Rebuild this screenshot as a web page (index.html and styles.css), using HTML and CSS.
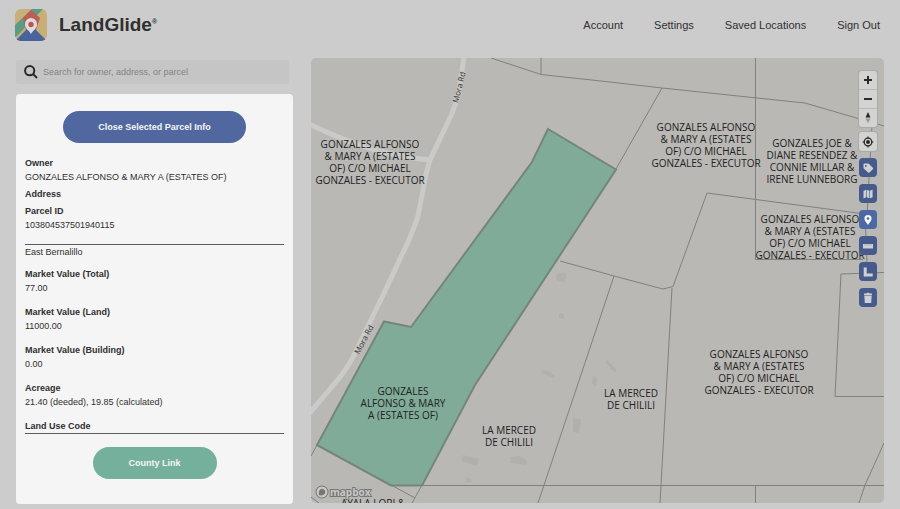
FILE: index.html
```html
<!DOCTYPE html>
<html lang="en">
<head>
  <meta charset="utf-8">
  <meta name="viewport" content="width=device-width, initial-scale=1">
  <title>LandGlide</title>
  <link rel="stylesheet" href="styles.css">
</head>
<body>
  <header class="header">
    <a class="brand" href="#">
      <svg class="brand-mark" viewBox="0 0 32 32" aria-hidden="true">
        <defs><clipPath id="mark"><rect width="32" height="32" rx="6"/></clipPath></defs>
        <g clip-path="url(#mark)">
          <rect width="32" height="32" fill="#c9ae78"/>
          <path d="M17 0h11L0 29V16z" fill="#5b9a84"/>
          <path d="m16 1 9 8-4 12H11L8 9z" fill="#bd5d55"/>
          <path d="M0 32 12 20h8l12 12z" fill="#49639c"/>
          <path d="M16 9a6 6 0 0 0-6 6.500c0 4 4 6 6 9.500 2-3.500 6-5.500 6-9.500A6 6 0 0 0 16 9z" fill="#dcdcdc"/>
          <circle cx="16" cy="15.500" r="2.700" fill="#b9574f"/>
        </g>
      </svg>
      <span class="brand-name">LandGlide<sup>®</sup></span>
    </a>
    <nav class="nav">
      <a href="#">Account</a>
      <a href="#">Settings</a>
      <a href="#">Saved Locations</a>
      <a href="#">Sign Out</a>
    </nav>
  </header>

  <main class="main">
    <aside class="sidebar">
      <form class="search">
        <svg viewBox="0 0 14 14" aria-hidden="true"><circle cx="5.7" cy="5.7" r="4.6"/><path d="m9 9 4 4"/></svg>
        <input type="search" aria-label="Search" placeholder="Search for owner, address, or parcel">
      </form>

      <section class="card">
        <button class="button button-close" type="button">Close Selected Parcel Info</button>
        <dl class="summary">
          <div><dt>Owner</dt><dd>GONZALES ALFONSO &amp; MARY A (ESTATES OF)</dd></div>
          <div><dt>Address</dt></div>
          <div><dt>Parcel ID</dt><dd>103804537501940115</dd></div>
        </dl>
        <p class="county">East Bernalillo</p>
        <dl class="details">
          <div><dt>Market Value (Total)</dt><dd>77.00</dd></div>
          <div><dt>Market Value (Land)</dt><dd>11000.00</dd></div>
          <div><dt>Market Value (Building)</dt><dd>0.00</dd></div>
          <div><dt>Acreage</dt><dd>21.40 (deeded), 19.85 (calculated)</dd></div>
          <div><dt>Land Use Code</dt></div>
        </dl>
        <a class="button button-county" href="#">County Link</a>
      </section>
    </aside>

    <section class="map">
      <svg class="map-canvas" viewBox="311 58 573 445" preserveAspectRatio="xMidYMid slice">
        <!-- buildings -->
        <g class="building">
          <path d="m556 275 8-3 3 4-3 6-7-1zM559 313l5 1v5l-5-1zM541 370l8 1 7 6-3 1-11-5zM463 455l16 4-2 7-16-5zM511 457l8-1 8 4-1 5-16-2zM466 477l5 2 1 3-6 1zM573 418l8 1-2 15-6-3zM593 375l4 3-1 9-4-4zM606 359l11 11-2 3-9-10z"/>
        </g>

        <!-- roads -->
        <g class="road">
          <path d="M464 56 460 85Q457 105 447 124L430 160Q426 172 423 190L418 216Q415 226 408 242L385 291 357 349Q350 364 340 377L309 414"/>
          <path d="M309 124Q345 141 372 149T430 160"/>
        </g>

        <!-- parcel lines -->
        <g class="parcel-line">
          <path d="M491 58 541 74.500 601 81 662 88 805 103 884 126M541 74V58"/>
          <path d="M662 88 616 169M755.500 58V259.500H863"/>
          <path d="M560 261 614 276 663 289 673 286.500 707 193 865 214 867 262"/>
          <path d="M872 126 867 215M884 272.500 841 274 835 396.500H884"/>
          <path d="M614 276 600 318 538 503M672 288 660 503M391 485.500H884M755.500 485V503"/>
          <path d="M884 443 865 485 859 503M317 445 311 456M391 485 415 498M422 485 412 503M311 497 319 503"/>
        </g>
        <path class="parcel-selected" d="M548 129 616 169.500 475 385 422 485.500H391L317 445 384 321.500 411 327 532 162z"/>

        <g class="road-label">
          <text transform="translate(458 87) rotate(-76)" y="4">Mora Rd</text>
          <text transform="translate(363 339) rotate(-62)" y="4">Mora Rd</text>
        </g>

        <g class="owner-label">
          <text><tspan x="370" y="148">GONZALES ALFONSO</tspan><tspan x="370" dy="12">&amp; MARY A (ESTATES</tspan><tspan x="370" dy="12">OF) C/O MICHAEL</tspan><tspan x="370" dy="12">GONZALES - EXECUTOR</tspan></text>
          <text><tspan x="706" y="131">GONZALES ALFONSO</tspan><tspan x="706" dy="12">&amp; MARY A (ESTATES</tspan><tspan x="706" dy="12">OF) C/O MICHAEL</tspan><tspan x="706" dy="12">GONZALES - EXECUTOR</tspan></text>
          <text><tspan x="812" y="147">GONZALES JOE &amp;</tspan><tspan x="812" dy="12">DIANE RESENDEZ &amp;</tspan><tspan x="812" dy="12">CONNIE MILLAR &amp;</tspan><tspan x="812" dy="12">IRENE LUNNEBORG</tspan></text>
          <text><tspan x="810" y="223">GONZALES ALFONSO</tspan><tspan x="810" dy="12">&amp; MARY A (ESTATES</tspan><tspan x="810" dy="12">OF) C/O MICHAEL</tspan><tspan x="810" dy="12">GONZALES - EXECUTOR</tspan></text>
          <text><tspan x="759" y="358">GONZALES ALFONSO</tspan><tspan x="759" dy="12">&amp; MARY A (ESTATES</tspan><tspan x="759" dy="12">OF) C/O MICHAEL</tspan><tspan x="759" dy="12">GONZALES - EXECUTOR</tspan></text>
          <text><tspan x="403" y="395">GONZALES</tspan><tspan x="403" dy="12">ALFONSO &amp; MARY</tspan><tspan x="403" dy="12">A (ESTATES OF)</tspan></text>
          <text><tspan x="509" y="434">LA MERCED</tspan><tspan x="509" dy="12">DE CHILILI</tspan></text>
          <text><tspan x="631" y="397">LA MERCED</tspan><tspan x="631" dy="12">DE CHILILI</tspan></text>
          <text x="373" y="507">AYALA LORI &amp;</text>
        </g>

        <g class="mapbox">
          <circle cx="322" cy="492" r="5.500"/>
          <path d="M319 495c-1-5 2-7 4-6 3 1 3 5 0 6-1 .6-3 .4-4 0z"/>
          <text x="330" y="496">mapbox</text>
        </g>
      </svg>

      <div class="controls">
        <div class="zoom">
          <button type="button" aria-label="Zoom in"><svg viewBox="0 0 18 18"><path class="stroke" d="M9 5v8M5 9h8"/></svg></button>
          <button type="button" aria-label="Zoom out"><svg viewBox="0 0 18 18"><path class="stroke" d="M5 9h8"/></svg></button>
          <button type="button" aria-label="Reset north"><svg viewBox="0 0 18 18"><path d="m9 3 2.500 5.500h-5z"/><path class="faint" d="m9 14 2.500-4.500h-5z"/></svg></button>
        </div>
        <button class="locate" type="button" aria-label="Find my location"><svg viewBox="0 0 18 18"><circle cx="9" cy="9" r="3.800" fill="none" stroke="#292929" stroke-width="1.300"/><circle cx="9" cy="9" r="2"/><path d="M8.400 3.500h1.200v2H8.400zM8.400 12.500h1.200v2H8.400zM3.500 8.400h2v1.200h-2zM12.500 8.400h2v1.200h-2z"/></svg></button>
        <button class="tool" type="button" aria-label="Labels"><svg viewBox="0 0 18 18"><path fill-rule="evenodd" d="M4.500 5.500a1 1 0 0 1 1-1h4l4.300 4.300a1 1 0 0 1 0 1.400l-3.300 3.300a1 1 0 0 1-1.400 0L4.500 9.200zM6.800 6a.9.9 0 1 0 0 1.800.9.900 0 0 0 0-1.800z"/></svg></button>
        <button class="tool" type="button" aria-label="Base map"><svg viewBox="0 0 18 18"><path d="m4.500 6 2.600-1.200v7.500l-2.600 1.100zM7.700 4.800l2.700 1v7.500l-2.700-1zM11 5.800l2.600-1.200v7.600L11 13.300z"/></svg></button>
        <button class="tool active" type="button" aria-label="Parcel info"><svg viewBox="0 0 18 18"><path fill-rule="evenodd" d="M9 4a3.600 3.600 0 0 0-3.600 3.600C5.400 10 7.500 11.500 9 14c1.500-2.500 3.600-4 3.600-6.400A3.600 3.600 0 0 0 9 4zm0 2.300a1.300 1.300 0 1 1 0 2.600 1.300 1.300 0 0 1 0-2.600z"/></svg></button>
        <button class="tool" type="button" aria-label="Measure distance"><svg viewBox="0 0 18 18"><path d="M4 7h10v4.500H4z"/><path d="M6 7v2M8 7v2M10 7v2M12 7v2" stroke="#8793b0" stroke-width=".5"/></svg></button>
        <button class="tool" type="button" aria-label="Measure area"><svg viewBox="0 0 18 18"><path d="M4.700 4.500h3v6h6v3h-9z"/></svg></button>
        <button class="tool" type="button" aria-label="Delete"><svg viewBox="0 0 18 18"><path d="M5 4.500h2.500l.5-.7h2l.5.700H13v1.500H5zM5.300 6.500h7.400l-.5 7.500H5.800z"/></svg></button>
      </div>
    </section>
  </main>
</body>
</html>
```
FILE: styles.css
```css
* {
  box-sizing: border-box;
}

body {
  margin: 0;
  min-height: 100vh;
  display: flex;
  flex-direction: column;
  background-color: #cccccc;
  color: #303030;
  font-family: "Liberation Sans", Arial, Helvetica, sans-serif;
  font-size: 9px;
  line-height: 14px;
}

a {
  color: inherit;
  text-decoration: none;
}

button {
  padding: 0;
  border: none;
  font: inherit;
  cursor: pointer;
}

.header {
  display: flex;
  justify-content: space-between;
  align-items: center;
  height: 50px;
  margin-bottom: 8px;
  padding: 0 20px 0 15px;
}

.brand {
  display: flex;
  align-items: center;
  gap: 12px;
}

.brand-mark {
  width: 32px;
  height: 32px;
}

.brand-name {
  font-size: 19px;
  font-weight: bold;
  line-height: 26px;
}

.brand-name sup {
  font-size: 7px;
  line-height: 0;
  vertical-align: 7px;
}

.nav {
  display: flex;
  gap: 31px;
  font-size: 11px;
}

.main {
  flex: 1;
  display: flex;
  gap: 18px;
  padding: 0 16px 5px;
}

.sidebar {
  width: 277px;
  flex-shrink: 0;
  display: flex;
  flex-direction: column;
  gap: 10px;
  padding-top: 2px;
}

.search {
  display: flex;
  align-items: center;
  gap: 5px;
  height: 24px;
  margin-right: 4px;
  padding: 0 8px;
  border-radius: 3px;
  background-color: #c5c5c5;
}

.search svg {
  width: 14px;
  height: 14px;
  fill: none;
  stroke: #292929;
  stroke-width: 2;
}

.search input {
  flex: 1;
  padding: 0;
  border: none;
  outline: none;
  background: none;
  color: #303030;
  font: inherit;
}

.search input::placeholder {
  color: #848484;
}

.card {
  flex: 1;
  display: flex;
  flex-direction: column;
  padding: 17px 9px 24px;
  border-radius: 4px;
  background-color: #f5f5f5;
}

.button {
  align-self: center;
  height: 32px;
  border-radius: 16px;
  color: #f5f5f5;
  font-weight: bold;
  line-height: 32px;
  text-align: center;
}

.button-close {
  width: 183px;
  background-color: #50689f;
}

.button-county {
  width: 124px;
  margin-top: 13px;
  background-color: #75b09d;
}

dl,
dd,
p {
  margin: 0;
}

dt {
  font-weight: bold;
}

.summary,
.details {
  display: flex;
  flex-direction: column;
  border-bottom: 1px solid #5c5c5c;
}

.summary {
  gap: 3px;
  margin-top: 13px;
  padding-bottom: 12px;
}

.county {
  margin-bottom: 8px;
}

.details {
  gap: 10px;
}

.map {
  position: relative;
  flex: 1;
  margin-bottom: 1px;
  border-radius: 5px;
  overflow: hidden;
  background-color: #b9b8b4;
}

.map-canvas {
  position: absolute;
  width: 100%;
  height: 100%;
}

.building {
  fill: #b1b0ad;
}

.road {
  fill: none;
  stroke: #cacac8;
  stroke-width: 5;
}

.parcel-line {
  fill: none;
  stroke: #80807e;
  stroke-width: 1;
}

.parcel-selected {
  fill: #80ab98;
  stroke: #75857c;
  stroke-width: 2;
}

.road-label {
  fill: #333333;
  stroke: #c4c4c2;
  stroke-width: 1;
  paint-order: stroke;
  font: 8px "Open Sans", sans-serif;
  text-anchor: middle;
}

.owner-label {
  fill: #222222;
  font: 10px "Open Sans", "Noto Sans", sans-serif;
  text-anchor: middle;
}

.mapbox {
  fill: #c9c9c7;
  stroke: #777775;
  stroke-width: 2;
  paint-order: stroke;
  font: bold 10px "Open Sans", sans-serif;
}

.mapbox path {
  fill: #777775;
  stroke: none;
}

.controls {
  position: absolute;
  top: 13px;
  right: 7px;
  display: flex;
  flex-direction: column;
  gap: 7px;
  width: 18px;
}

.controls button {
  display: block;
  width: 100%;
  height: 19px;
}

.controls svg {
  display: block;
  width: 18px;
  height: 18px;
  margin: 0 auto;
}

.zoom,
.locate {
  border-radius: 3px;
  background-color: #d3d3d1;
  box-shadow: 0 0 0 1px #acaba8;
  overflow: hidden;
  fill: #292929;
}

.zoom {
  margin-bottom: -2px;
}

.zoom button {
  height: 18px;
  background: none;
}

.zoom button + button {
  height: 19px;
  border-top: 1px solid #bcbcba;
}

.stroke {
  stroke: #292929;
  stroke-width: 2;
}

.faint {
  fill: #989896;
}

.tool {
  border-radius: 4px;
  background-color: #465b8c;
  fill: #cdd1d2;
}

.tool.active {
  background-color: #4c68a5;
  fill: #f5f5f5;
}
```
